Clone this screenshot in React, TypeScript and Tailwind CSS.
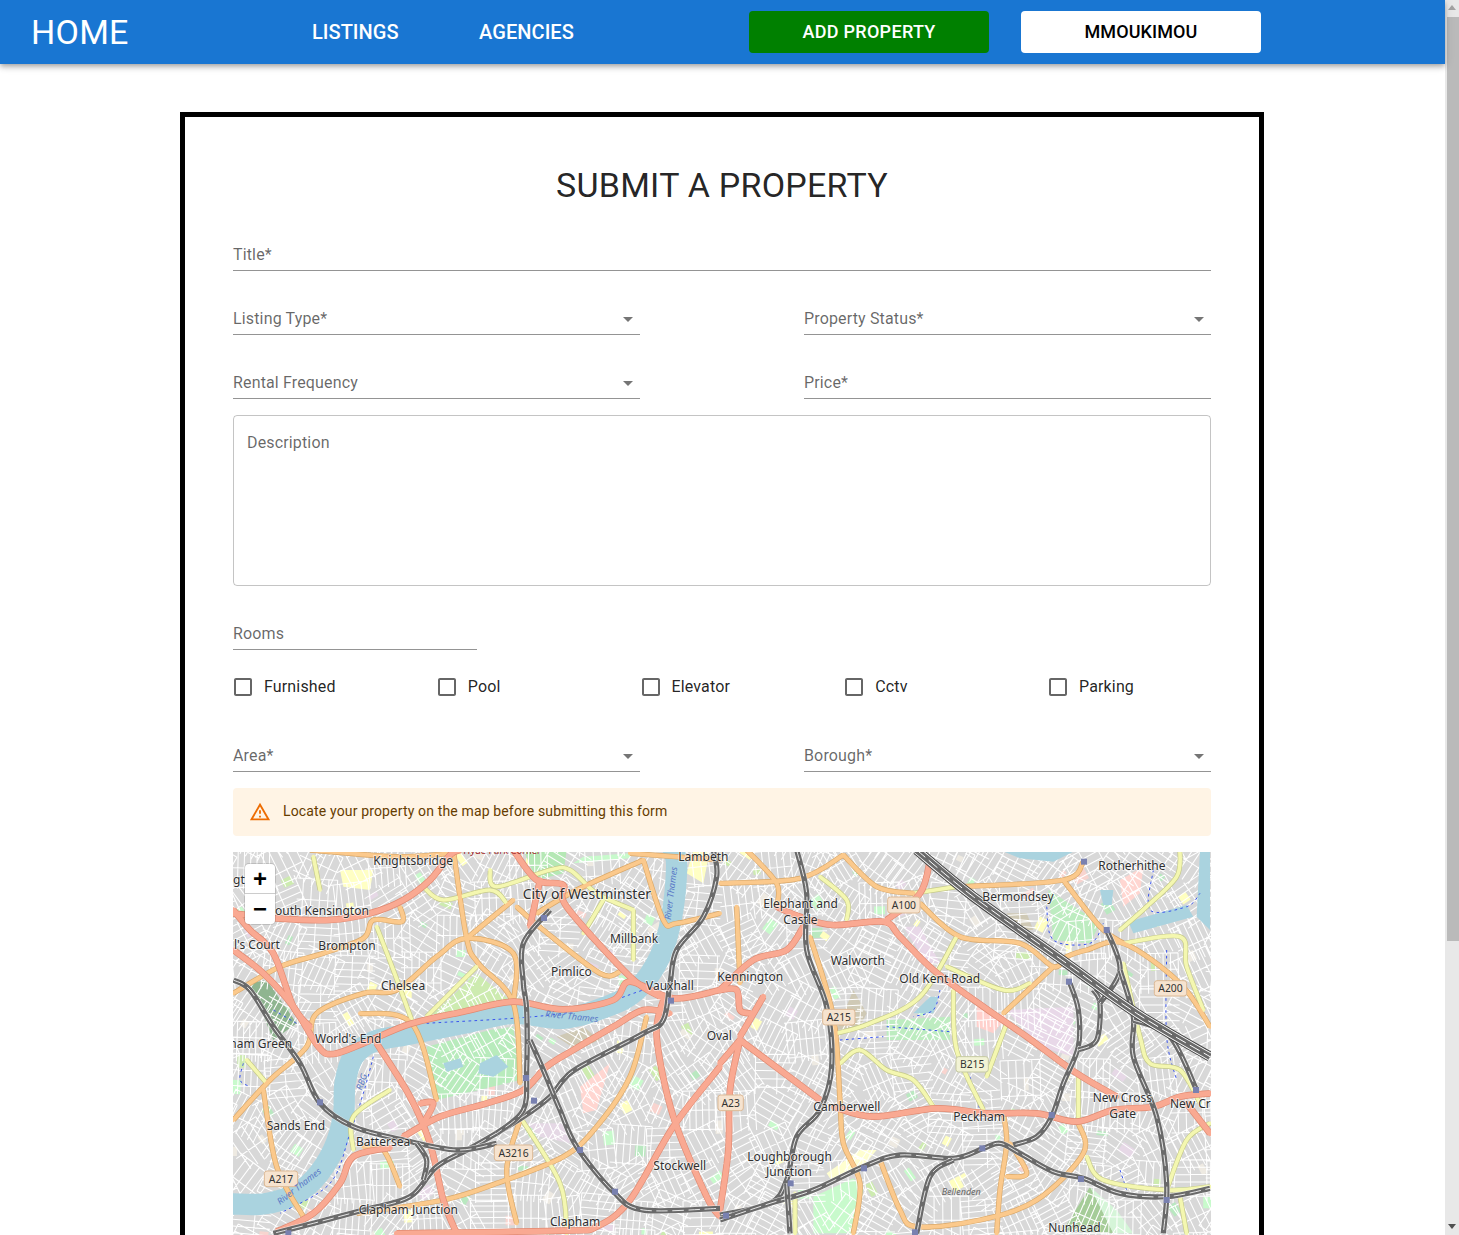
import React from "react";

type Pt = [number, number];
const OFF = 1470;

function parse(s: string, off = 0): Pt[] {
  return s.trim().split(/\s+/).map((p) => {
    const [x, y] = p.split(",").map(Number);
    return [x + off, y] as Pt;
  });
}
function smooth(pts: Pt[]): string {
  let d = `M${pts[0][0]} ${pts[0][1]}`;
  for (let i = 0; i < pts.length - 1; i++) {
    const p0 = pts[Math.max(0, i - 1)];
    const p1 = pts[i];
    const p2 = pts[i + 1];
    const p3 = pts[Math.min(pts.length - 1, i + 2)];
    const c1x = p1[0] + (p2[0] - p0[0]) / 6;
    const c1y = p1[1] + (p2[1] - p0[1]) / 6;
    const c2x = p2[0] - (p3[0] - p1[0]) / 6;
    const c2y = p2[1] - (p3[1] - p1[1]) / 6;
    d += `C${c1x.toFixed(1)} ${c1y.toFixed(1)} ${c2x.toFixed(1)} ${c2y.toFixed(1)} ${p2[0]} ${p2[1]}`;
  }
  return d;
}
const both = (a: string[], b: string[]) => [...a.map((s) => smooth(parse(s))), ...b.map((s) => smooth(parse(s, OFF)))];

let seed = 12345;
const rnd = () => {
  seed = (seed * 16807) % 2147483647;
  return seed / 2147483647;
};

function buildStreets() {
  let d = "";
  const patches: { x: number; y: number; w: number; h: number; a: number; c: string }[] = [];
  const colors = ["#cdebb0", "#ffffc0", "#c8facc", "#e6d8e6", "#eeeae2", "#f8d4cf", "#c8facc", "#ffffc0", "#eeeae2", "#b9e8c0"];
  const tile = 105;
  for (let ty = -tile; ty < 1250; ty += tile) {
    for (let tx = -tile; tx < 3050; tx += tile) {
      const cx = tx + tile / 2 + (rnd() - 0.5) * 20;
      const cy = ty + tile / 2 + (rnd() - 0.5) * 20;
      const a = (Math.round(rnd() * 5) * Math.PI) / 6 + (rnd() - 0.5) * 0.25;
      const ca = Math.cos(a);
      const sa = Math.sin(a);
      const r = 60;
      const s1 = 17 + rnd() * 9;
      for (let o = -r; o <= r; o += s1) {
        d += `M${(cx + ca * -r - sa * o).toFixed(0)} ${(cy + sa * -r + ca * o).toFixed(0)}L${(cx + ca * r - sa * o).toFixed(0)} ${(cy + sa * r + ca * o).toFixed(0)}`;
      }
      const s2 = 45 + rnd() * 30;
      for (let o = -r; o <= r; o += s2) {
        d += `M${(cx + ca * o + sa * r).toFixed(0)} ${(cy + sa * o - ca * r).toFixed(0)}L${(cx + ca * o - sa * r).toFixed(0)} ${(cy + sa * o + ca * r).toFixed(0)}`;
      }
      if (rnd() < 0.55) {
        patches.push({
          x: tx + rnd() * tile,
          y: ty + rnd() * tile,
          w: 14 + rnd() * 30,
          h: 12 + rnd() * 22,
          a: (a * 180) / Math.PI,
          c: colors[Math.floor(rnd() * colors.length)],
        });
      }
    }
  }
  return { d, patches };
}
const { d: streetD, patches } = buildStreets();

const trunk = both(
  [
    "10,190 140,205 300,210 420,190 520,150 600,90 660,15 690,0",
    "10,300 100,370 190,470 265,590 310,612 400,580 540,522 700,485 850,455 1000,478 1150,450 1200,395 1330,445 1470,420",
    "850,0 920,90 1000,105 1010,170 1200,380 1290,440",
    "930,90 900,230",
    "10,180 60,240 130,310 190,470 240,530",
    "440,580 540,740 600,880 640,1050 680,1150",
    "520,860 630,800 770,760 880,720 950,650 1030,600 1150,530 1240,480 1320,490",
    "140,1145 250,1090 330,1000 370,920 480,893",
    "1300,450 1280,560 1330,800 1430,1040 1470,1100",
    "1470,650 1330,830 1200,1050 1100,1130 1000,1142 500,1150",
    "570,760 610,760 580,820",
  ],
  [
    "170,170 240,200 340,225 490,215 540,260 640,360 790,470 920,560 1070,670 1190,740",
    "630,30 600,130 500,210",
    "0,420 100,330 200,300 250,230",
    "60,570 300,750",
    "60,570 0,640",
    "60,570 30,720 25,900 0,1080",
    "130,440 60,560",
    "0,420 50,420 60,480 90,490",
    "340,770 460,800 650,775 800,790 950,790 1070,815 1180,780 1300,770 1380,740 1470,730",
    "1400,760 1470,850",
  ]
);
const primary = both(
  [
    "10,430 150,350 280,310 400,265 430,210 515,215 510,170",
    "10,810 120,690 230,590 260,490 400,430 500,420 620,320 710,265 850,310 850,460",
    "670,0 710,265 745,340 850,460 870,700",
    "850,150 710,265",
    "860,170 940,240 1110,370 1170,365",
    "1240,30 1040,120 920,190",
    "1240,30 1300,210 1340,220 1470,190",
    "1200,10 1470,30",
    "1250,500 1200,680 1100,830 1000,920 800,1000 640,1050 380,1090",
    "390,490 545,520 620,750",
    "400,890 460,900 510,1010",
    "100,720 140,950 220,1100",
    "870,810 830,960 860,1120",
    "240,0 500,20 660,10",
  ],
  [
    "0,100 240,85 370,15",
    "80,0 170,100 170,170",
    "370,15 470,110 580,130",
    "600,160 720,260 900,280 1000,350 1040,320 1100,300 1210,280 1380,400 1470,530",
    "730,110 1030,90 1090,35",
    "1030,90 1140,230 1210,280",
    "270,260 340,500 360,750 370,880 420,1000 400,1150",
    "480,930 540,1080 590,1130 780,1110 950,1050 1090,910 1075,820",
    "850,790 860,880 840,1020 830,1150",
    "860,980 920,970 870,880",
    "850,490 1000,350",
    "50,170 60,400",
  ]
);
const secondary = both(
  [
    "250,20 270,120",
    "440,230 490,360 545,510",
    "590,500 740,350",
    "580,110 640,150 780,120 830,160",
    "780,60 800,110 960,60 1020,60 1100,130 1210,180",
    "1060,250 1120,150",
    "1210,180 1210,330",
    "870,800 990,1000 1010,1150",
    "370,900 370,800 480,720",
    "50,630 110,700",
  ],
  [
    "710,110 580,130",
    "300,80 380,150 380,210",
    "350,550 450,520 600,440 710,260",
    "680,350 850,420 930,400",
    "700,420 710,600 790,780",
    "860,520 800,680",
    "360,640 420,600 500,660 580,690 640,770",
    "1100,920 1150,990 1340,1020 1470,1010",
    "1210,340 1260,560 1290,640 1380,660 1440,760",
    "1380,0 1370,80 1280,170 1200,240",
    "1210,280 1380,260 1400,350 1450,480",
    "1075,680 1075,810",
    "1340,1020 1400,870 1470,820",
    "1380,1040 1400,1150",
    "225,1030 225,1150",
  ]
);
const rail = both(
  [
    "1450,0 1460,80 1420,200 1340,300 1320,400 1300,510 1240,550 1050,650 1000,690 960,740 880,800 730,890 620,950 540,1040 400,1080 250,1120 130,1150",
    "960,180 880,280 880,400 890,480 890,660 880,780 800,850",
    "900,570 940,660 990,780 1040,890 1150,1025 1240,1080 1470,1075",
    "10,390 60,420 130,530 210,640 270,760 370,830 520,870 680,900 800,880",
    "560,880 590,930 580,990",
  ],
  [
    "230,0 260,130 260,300 320,470 335,650 300,780 230,860 200,990 150,1060 0,1095",
    "0,1110 150,1060 280,1020 430,950 540,915 700,925 790,895 840,880 900,910 1000,965 1090,985 1200,1030 1340,1040 1470,1015",
    "590,1150 630,980 700,930",
    "1050,400 1075,480 1075,590 1030,700 995,800 950,860 880,885",
    "1075,600 1130,570 1140,460 1120,420",
    "1160,240 1200,360 1140,460",
    "1200,360 1240,500 1240,620 1310,800 1340,1000 1330,1150",
    "1240,510 1350,560 1430,720",
    "200,1000 210,1150",
  ]
);
const bigRail = both([], ["590,0 760,140 1040,340 1250,490 1470,620"]);
const boundary = both(
  [
    "130,480 200,520",
    "40,640 30,690 60,710",
    "430,620 400,730 360,850 300,1000 150,1090",
    "590,520 1000,490 1240,420",
  ],
  [
    "360,570 490,560",
    "500,530 690,545",
    "660,420 640,480 580,500",
    "980,170 1000,270 1110,280 1150,220",
    "1300,60 1290,180 1400,170 1440,130",
    "1340,300 1340,560 1370,690",
    "750,680 780,780",
    "1200,960 1220,1020",
  ]
);
const stations: Pt[] = [
  ...parse("270,757 888,684 912,752 1050,900 1155,1025 1323,452 942,204 175,1150"),
  ...parse("1092,35 1160,240 1047,395 995,795 787,895 432,955 212,1000 18,1097 1083,987 1340,1050 1428,720 585,1147", OFF),
];
const water = both(
  ["10,1062 100,1062 180,1040 250,990 310,900 340,800 345,700 370,620 430,575 540,552 700,520 850,490 1000,505 1130,470 1220,420 1290,320 1325,200 1340,50 1330,0"],
  []
);

function poly(pts: string, off = 0) {
  return parse(pts, off).map((p) => p.join(",")).join(" ");
}
const areas: { p: string; c: string }[] = [
  { p: poly("590,590 780,540 850,530 870,690 620,750"), c: "#b8ebbc" },
  { p: poly("880,0 1010,0 1000,70 920,90"), c: "#b5e8b5" },
  { p: poly("740,370 850,460 600,500"), c: "#cdebb0" },
  { p: poly("60,400 110,390 200,520 130,570"), c: "#8fb590" },
  { p: poly("1060,20 1200,10 1200,25 1030,40"), c: "#c8facc" },
  { p: poly("330,60 430,60 420,120 340,110"), c: "#ffffc4" },
  { p: poly("1050,710 1140,640 1100,780 1060,790"), c: "#ffd6d1" },
  { p: poly("980,560 1060,530 1110,570 1040,600"), c: "#cfc9b5" },
  { p: poly("890,820 1000,820 1020,880 930,860"), c: "#e5d8e5" },
  { p: poly("1390,0 1440,0 1420,100 1370,70"), c: "#ffffc4" },
  { p: poly("550,230 600,230 660,340 620,340", OFF), c: "#e8d8e8" },
  { p: poly("860,480 1060,470 1060,620 960,590", OFF), c: "#e8d8e8" },
  { p: poly("770,470 860,500 820,550 770,530", OFF), c: "#ffd0cc" },
  { p: poly("500,510 690,500 690,570 500,570", OFF), c: "#bdecc0" },
  { p: poly("985,120 1140,220 1110,280 1000,270", OFF), c: "#bdecc0" },
  { p: poly("1030,1140 1110,1010 1180,1150", OFF), c: "#a5cc98" },
  { p: poly("1110,1010 1190,1080 1240,1150 1180,1150", OFF), c: "#d5f5d8" },
  { p: poly("320,970 420,900 470,900 420,960 340,1000", OFF), c: "#ffffd0" },
  { p: poly("280,1040 400,985 430,1020 400,1150 280,1150", OFF), c: "#c8facc" },
  { p: poly("1200,90 1270,50 1260,130 1210,170", OFF), c: "#ffd6d1" },
  { p: poly("400,420 440,490 420,530 350,540", OFF), c: "#cfc9b5" },
  { p: poly("860,190 920,190 940,240 880,240", OFF), c: "#cfc9b5" },
];
const waters: { p: string }[] = [
  { p: poly("750,640 800,615 835,650 790,680 745,670") },
  { p: poly("640,640 690,625 700,650 650,665") },
  { p: poly("840,0 1000,0 1070,0 1000,35 900,25", OFF) },
  { p: poly("1440,0 1470,0 1470,240 1430,200", OFF) },
  { p: poly("1225,215 1400,165 1420,200 1240,250", OFF) },
  { p: poly("580,490 630,440 655,440 640,490", OFF) },
  { p: poly("1140,120 1180,120 1175,165 1150,165", OFF) },
];

const labels: { t: string; x: number; y: number; s?: number }[] = [
  { t: "Knightsbridge", x: 430, y: 45 },
  { t: "Lambeth", x: 1345, y: 33 },
  { t: "gt", x: 9, y: 100 },
  { t: "City of Westminster", x: 878, y: 145, s: 42 },
  { t: "outh Kensington", x: 135, y: 193 },
  { t: "l's Court", x: 12, y: 295 },
  { t: "Brompton", x: 265, y: 298 },
  { t: "Chelsea", x: 453, y: 418 },
  { t: "Millbank", x: 1140, y: 277 },
  { t: "Pimlico", x: 963, y: 376 },
  { t: "Vauxhall", x: 1248, y: 419 },
  { t: "Oval", x: 1430, y: 570 },
  { t: "World's End", x: 255, y: 577 },
  { t: "ham Green", x: -2, y: 592 },
  { t: "Sands End", x: 110, y: 840 },
  { t: "Battersea", x: 378, y: 887 },
  { t: "Clapham Junction", x: 386, y: 1092 },
  { t: "Clapham", x: 960, y: 1128 },
  { t: "Stockwell", x: 1270, y: 959 },
  { t: "Elephant and", x: 130 + OFF, y: 173 },
  { t: "Castle", x: 190 + OFF, y: 220 },
  { t: "Walworth", x: 332 + OFF, y: 345 },
  { t: "Kennington", x: OFF - 8, y: 392 },
  { t: "Old Kent Road", x: 538 + OFF, y: 397 },
  { t: "Bermondsey", x: 787 + OFF, y: 152 },
  { t: "Rotherhithe", x: 1135 + OFF, y: 58 },
  { t: "Camberwell", x: 280 + OFF, y: 782 },
  { t: "Peckham", x: 700 + OFF, y: 813 },
  { t: "New Cross", x: 1118 + OFF, y: 755 },
  { t: "Gate", x: 1168 + OFF, y: 802 },
  { t: "New Cr", x: 1350 + OFF, y: 772 },
  { t: "Loughborough", x: 82 + OFF, y: 931 },
  { t: "Junction", x: 138 + OFF, y: 977 },
  { t: "Nunhead", x: 985 + OFF, y: 1146 },
];
const shields: { t: string; x: number; y: number; w: number; h: number; b?: boolean }[] = [
  { t: "A3216", x: 793, y: 885, w: 115, h: 47 },
  { t: "A217", x: 103, y: 963, w: 100, h: 47 },
  { t: "A100", x: 503 + OFF, y: 141, w: 97, h: 48 },
  { t: "A215", x: 308 + OFF, y: 478, w: 97, h: 47 },
  { t: "B215", x: 708 + OFF, y: 620, w: 97, h: 46, b: true },
  { t: "A200", x: 1303 + OFF, y: 392, w: 97, h: 46 },
  { t: "A23", x: OFF - 6, y: 735, w: 76, h: 47 },
];
const rivers: { t: string; x: number; y: number; r: number; s: number }[] = [
  { t: "River Thames", x: 945, y: 500, r: 6, s: 27 },
  { t: "River Thames", x: 150, y: 1065, r: -38, s: 27 },
  { t: "River Thames", x: 1322, y: 210, r: -83, s: 27 },
  { t: "RBG", x: 395, y: 722, r: -70, s: 27 },
];

function MapArt() {
  const font = "'Noto Sans', sans-serif";
  return (
    <svg viewBox="9 6 2934 1149" className="block w-full h-[383px]">
      <rect x="0" y="0" width="3000" height="1200" fill="#d8d8d8" />
      {patches.map((p, i) => (
        <rect key={i} x={p.x} y={p.y} width={p.w} height={p.h} fill={p.c} transform={`rotate(${p.a} ${p.x} ${p.y})`} />
      ))}
      {areas.map((a, i) => (
        <polygon key={i} points={a.p} fill={a.c} />
      ))}
      <path d={streetD} stroke="#ffffff" strokeWidth="3.2" fill="none" />
      {water.map((d, i) => (
        <path key={i} d={d} stroke="#aad3df" strokeWidth="64" fill="none" strokeLinecap="round" strokeLinejoin="round" />
      ))}
      {waters.map((a, i) => (
        <polygon key={i} points={a.p} fill="#aad3df" />
      ))}
      {boundary.map((d, i) => (
        <path key={i} d={d} stroke="#3a55ee" strokeWidth="3" strokeDasharray="8 10" fill="none" />
      ))}
      {secondary.map((d, i) => (
        <path key={i} d={d} stroke="#c5c98a" strokeWidth="15" fill="none" strokeLinejoin="round" />
      ))}
      {primary.map((d, i) => (
        <path key={i} d={d} stroke="#d9a86a" strokeWidth="16" fill="none" strokeLinejoin="round" />
      ))}
      {secondary.map((d, i) => (
        <path key={i} d={d} stroke="#f4f7b0" strokeWidth="11" fill="none" strokeLinejoin="round" strokeLinecap="round" />
      ))}
      {primary.map((d, i) => (
        <path key={i} d={d} stroke="#fbc98c" strokeWidth="12" fill="none" strokeLinejoin="round" strokeLinecap="round" />
      ))}
      {trunk.map((d, i) => (
        <path key={i} d={d} stroke="#e08a72" strokeWidth="20" fill="none" strokeLinejoin="round" />
      ))}
      {trunk.map((d, i) => (
        <path key={i} d={d} stroke="#f9a992" strokeWidth="16" fill="none" strokeLinejoin="round" strokeLinecap="round" />
      ))}
      {rail.map((d, i) => (
        <g key={i} fill="none">
          <path d={d} stroke="#ffffff" strokeWidth="19" strokeLinejoin="round" opacity="0.7" />
          <path d={d} stroke="#6a6a6a" strokeWidth="16" strokeLinejoin="round" />
          <path d={d} stroke="#ffffff" strokeWidth="2.5" strokeDasharray="34 14" strokeLinejoin="round" />
        </g>
      ))}
      {bigRail.map((d, i) => (
        <g key={i} fill="none">
          <path d={d} stroke="#444444" strokeWidth="30" />
          <path d={d} stroke="#ffffff" strokeWidth="24" />
          <path d={d} stroke="#6a6a6a" strokeWidth="19" />
          <path d={d} stroke="#ffffff" strokeWidth="3" strokeDasharray="34 14" />
        </g>
      ))}
      {stations.map((s, i) => (
        <rect key={i} x={s[0] - 9} y={s[1] - 9} width="18" height="18" fill="#7981b0" />
      ))}
      {shields.map((s, i) => (
        <g key={i}>
          <rect x={s.x} y={s.y} width={s.w} height={s.h} rx="8" fill={s.b ? "#f2f3d5" : "#f6e3cf"} stroke={s.b ? "#c5c9a0" : "#dcb995"} strokeWidth="3" />
          <text x={s.x + s.w / 2} y={s.y + s.h / 2 + 11} textAnchor="middle" fontFamily={font} fontSize="31" fill="#333333">
            {s.t}
          </text>
        </g>
      ))}
      {rivers.map((r, i) => (
        <text key={i} x={r.x} y={r.y} transform={`rotate(${r.r} ${r.x} ${r.y})`} fontFamily={font} fontSize={r.s} fontStyle="italic" fill="#5c7ac7">
          {r.t}
        </text>
      ))}
      <text x="700" y="11" fontFamily={font} fontSize="28" fill="#a0262a">
        Hyde Park Corner
      </text>
      <text x={665 + OFF} y="1036" fontFamily={font} fontSize="27" fontStyle="italic" fill="#666666">
        Bellenden
      </text>
      {labels.map((l, i) => (
        <text
          key={i}
          x={l.x}
          y={l.y + 1}
          fontFamily={font}
          fontSize={l.s ?? 36}
          fill="#2f2f2f"
          stroke="rgba(255,255,255,0.65)"
          strokeWidth="5"
          paintOrder="stroke"
        >
          {l.t}
        </text>
      ))}
    </svg>
  );
}

function Arrow() {
  return (
    <svg viewBox="0 0 24 24" className="w-6 h-6 fill-[rgba(0,0,0,0.54)] shrink-0">
      <path d="M7 10l5 5 5-5z" />
    </svg>
  );
}

function Field({ label, select, className = "" }: { label: string; select?: boolean; className?: string }) {
  return (
    <div className={`flex h-[33px] items-center justify-between border-b border-[rgba(0,0,0,0.42)] pt-0.5 text-base tracking-[0.15px] text-[rgba(0,0,0,0.6)] ${className}`}>
      <span>{label}</span>
      {select ? <Arrow /> : null}
    </div>
  );
}

function Check({ label }: { label: string }) {
  return (
    <div className="flex w-[203.75px] shrink-0 items-center">
      <svg viewBox="0 0 24 24" className="w-6 h-6 -ml-0.5 fill-[rgba(0,0,0,0.6)] shrink-0">
        <path d="M19 5v14H5V5h14m0-2H5c-1.1 0-2 .9-2 2v14c0 1.1.9 2 2 2h14c1.1 0 2-.9 2-2V5c0-1.1-.9-2-2-2z" />
      </svg>
      <span className="ml-[9px] text-base tracking-[0.15px] text-[rgba(0,0,0,0.87)]">{label}</span>
    </div>
  );
}

export default function App() {
  return (
    <div className="flex h-[1235px] overflow-hidden bg-white font-['Roboto',sans-serif]">
      <div className="w-[1445px] shrink-0">
        <header className="relative z-10 flex h-16 items-center bg-[#1976d2] text-white shadow-[0_2px_4px_-1px_rgba(0,0,0,0.2),0_4px_5px_0_rgba(0,0,0,0.14),0_1px_10px_0_rgba(0,0,0,0.12)]">
          <div className="ml-[31px] w-[281px] text-[34px] font-normal leading-10 tracking-[0.25px]">HOME</div>
          <div className="w-[167px] text-[20px] font-medium tracking-[0.02px]">LISTINGS</div>
          <div className="w-[270px] text-[20px] font-medium tracking-[0.07px]">AGENCIES</div>
          <div className="flex h-[42px] w-60 items-center justify-center rounded bg-[#008000] pb-0.5 text-[18px] font-medium tracking-[0.3px]">
            ADD PROPERTY
          </div>
          <div className="ml-8 flex h-[42px] w-60 items-center justify-center rounded bg-white pb-0.5 text-[18px] font-medium tracking-[0.1px] text-black">
            MMOUKIMOU
          </div>
        </header>
        <main className="relative ml-[180px] mt-12 w-[1084px] border-[5px] border-black px-12 pb-12 pt-[47px]">
          <h1 className="text-center text-[34px] font-normal leading-[42px] tracking-[0.25px] text-[rgba(0,0,0,0.87)]">
            SUBMIT A PROPERTY
          </h1>
          <Field label="Title*" className="mt-8" />
          <div className="mt-[31px] flex justify-between">
            <Field label="Listing Type*" select className="w-[407px]" />
            <Field label="Property Status*" select className="w-[407px]" />
          </div>
          <div className="mt-[31px] flex justify-between">
            <Field label="Rental Frequency" select className="w-[407px]" />
            <Field label="Price*" className="w-[407px]" />
          </div>
          <div className="mt-4 h-[171px] rounded border border-[rgba(0,0,0,0.23)] px-[13px] pt-[15px] text-base tracking-[0.15px] text-[rgba(0,0,0,0.6)]">
            Description
          </div>
          <Field label="Rooms" className="mt-[31px] w-[244px]" />
          <div className="mb-8 mt-4 flex h-[42px] items-center">
            <Check label="Furnished" />
            <Check label="Pool" />
            <Check label="Elevator" />
            <Check label="Cctv" />
            <Check label="Parking" />
          </div>
          <div className="-mt-px flex justify-between">
            <Field label="Area*" select className="w-[407px]" />
            <Field label="Borough*" select className="w-[407px]" />
          </div>
          <div className="mt-4 flex h-12 items-center rounded bg-[#fff4e5] px-4 text-sm tracking-[0.15px] text-[#663c00]">
            <svg viewBox="0 0 24 24" className="mr-3 h-[22px] w-[22px] shrink-0 fill-[#ed6c02]">
              <path d="M12 5.99L19.53 19H4.47L12 5.99M12 2L1 21h22L12 2zm1 14h-2v2h2v-2zm0-6h-2v4h2v-4z" />
            </svg>
            <span className="-mt-0.5">Locate your property on the map before submitting this form</span>
          </div>
          <div className="relative mt-4 h-[383px] overflow-hidden">
            <MapArt />
            <div className="absolute left-3 top-3 flex w-[30px] flex-col rounded-sm bg-white text-black shadow-[0_0_0_1px_rgba(0,0,0,0.12)]">
              <div className="flex h-[30px] items-center justify-center border-b border-[#cccccc] font-['Liberation_Sans',sans-serif] text-[24px] font-bold leading-none">
                +
              </div>
              <div className="flex h-[30px] items-center justify-center font-['Liberation_Sans',sans-serif] text-[24px] font-bold leading-none">
                −
              </div>
            </div>
          </div>
        </main>
      </div>
      <aside className="flex w-[14px] shrink-0 flex-col items-center bg-[#e8e8e8]">
        <svg viewBox="0 0 14 17" className="h-[17px] w-[14px] shrink-0 fill-[#a3a3a3]">
          <path d="M7 5l4 5H3z" />
        </svg>
        <div className="ml-0.5 h-[924px] w-3 shrink-0 bg-[#bababa]" />
        <div className="flex-1" />
        <svg viewBox="0 0 14 17" className="h-[17px] w-[14px] shrink-0 fill-[#505050]">
          <path d="M3 6h8l-4 5z" />
        </svg>
      </aside>
    </div>
  );
}
